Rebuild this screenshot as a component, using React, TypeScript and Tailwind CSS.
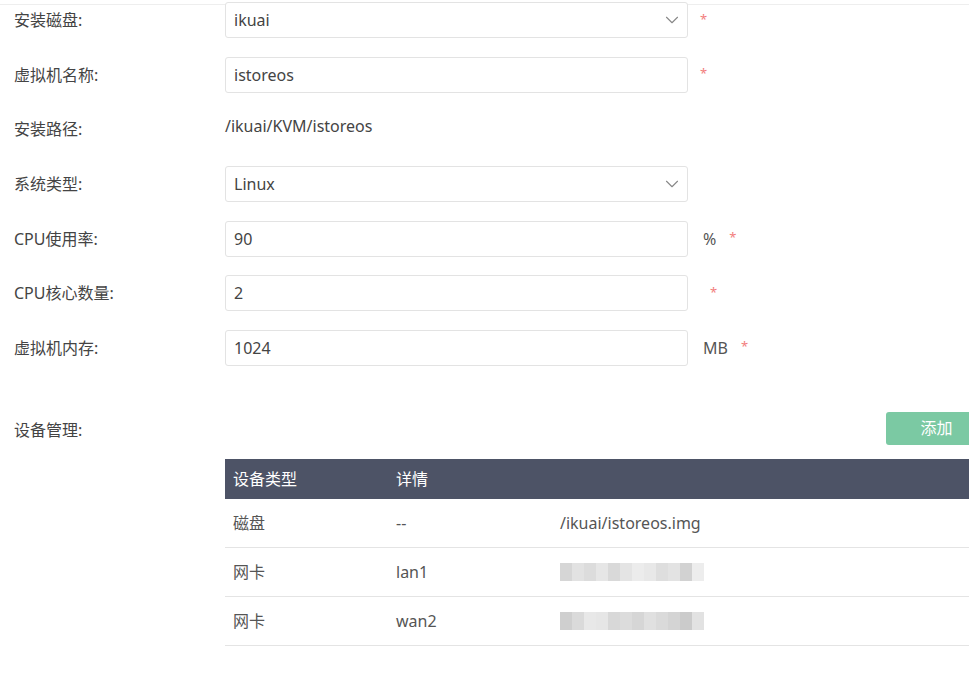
import { ChevronDown } from 'lucide-react';

const font = { fontFamily: '"Noto Sans", "Noto Sans CJK SC", sans-serif' };

function Star({ className = 'ml-[12px]' }: { className?: string }) {
  return <span className={`${className} text-[13px] leading-none text-[#f27d7d] -mt-[2px]`}>*</span>;
}

function Row({ label, children }: { label: string; children: React.ReactNode }) {
  return (
    <div className="flex items-center h-[36px] mb-[18.67px]">
      <div className="w-[211px] shrink-0 text-[16px] text-[#444]">{label}</div>
      {children}
    </div>
  );
}

function Field({ value, select }: { value: string; select?: boolean }) {
  return (
    <div className="flex items-center justify-between w-[463px] shrink-0 h-[36px] border border-[#e3e3e3] rounded-[3px] bg-white pl-[8px] pr-[4px] text-[16px] text-[#444]">
      <span>{value}</span>
      {select && <ChevronDown className="w-[22px] h-[22px] text-[#888]" strokeWidth={1.2} />}
    </div>
  );
}

// pixelated (masked) text
function Mosaic({ shades }: { shades: string[] }) {
  return (
    <div className="flex h-[18px]">
      {shades.map((c, i) => (
        <div key={i} className="w-[12px] h-full" style={{ background: c }} />
      ))}
    </div>
  );
}

const rows = [
  { type: '磁盘', detail: '--', extra: '/ikuai/istoreos.img' },
  { type: '网卡', detail: 'lan1', mosaic: ['#d6d6d6', '#e2e2e2', '#dcdcdc', '#e6e6e6', '#d9d9d9', '#e4e4e4', '#ececec', '#e8e8e8', '#dedede', '#e3e3e3', '#d2d2d2', '#ededed'] },
  { type: '网卡', detail: 'wan2', mosaic: ['#cfcfcf', '#dadada', '#e8e8e8', '#e6e6e6', '#d8d8d8', '#dcdcdc', '#d6d6d6', '#e0e0e0', '#dadada', '#d4d4d4', '#cbcbcb', '#e2e2e2'] },
];

export default function App() {
  return (
    <div className="w-[969px] h-[675px] bg-white overflow-hidden" style={font}>
      <div className="h-[4px]" />
      <div className="border-t border-[#eeeeee]" />
      <div className="pl-[14px] -mt-[3px]">
        <Row label="安装磁盘:">
          <Field value="ikuai" select />
          <Star />
        </Row>
        <Row label="虚拟机名称:">
          <Field value="istoreos" />
          <Star />
        </Row>
        <Row label="安装路径:">
          <span className="text-[16px] text-[#444] -mt-[6px]">/ikuai/KVM/istoreos</span>
        </Row>
        <Row label="系统类型:">
          <Field value="Linux" select />
        </Row>
        <Row label="CPU使用率:">
          <Field value="90" />
          <span className="ml-[15px] text-[16px] text-[#555]">%</span>
          <Star className="ml-[13px]" />
        </Row>
        <Row label="CPU核心数量:">
          <Field value="2" />
          <Star className="ml-[22px]" />
        </Row>
        <Row label="虚拟机内存:">
          <Field value="1024" />
          <span className="ml-[15px] text-[16px] text-[#555]">MB</span>
          <Star className="ml-[13px]" />
        </Row>

        <div className="flex items-start mt-[46px]">
          <div className="w-[211px] shrink-0 pt-[6px] text-[16px] text-[#444]">设备管理:</div>
          <div className="w-[762px] shrink-0">
            <div className="flex justify-end">
              <button className="w-[101px] h-[33px] rounded-[3px] bg-[#7bc9a3] text-white text-[16px]">添加</button>
            </div>
            <div className="mt-[14px] text-[16px]">
              <div className="flex items-center h-[40px] bg-[#4d5366] text-white">
                <div className="w-[163px] pl-[8px]">设备类型</div>
                <div className="w-[164px] pl-[8px]">详情</div>
                <div className="flex-1" />
              </div>
              {rows.map((r, i) => (
                <div key={i} className="flex items-center h-[49px] border-b border-[#e4e4e4] text-[#555]">
                  <div className="w-[163px] pl-[8px]">{r.type}</div>
                  <div className="w-[164px] pl-[8px]">{r.detail}</div>
                  <div className="flex-1 pl-[8px]">
                    {r.extra ? r.extra : <Mosaic shades={r.mosaic!} />}
                  </div>
                </div>
              ))}
            </div>
          </div>
        </div>
      </div>
    </div>
  );
}
